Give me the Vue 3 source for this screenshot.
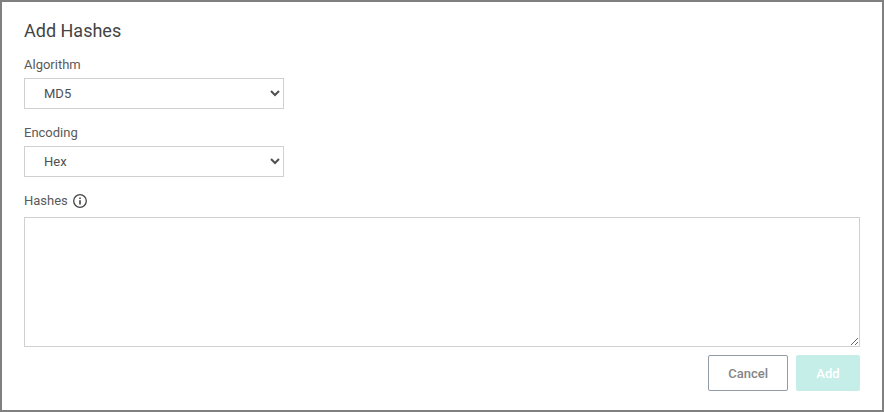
<script setup>
import { ref } from 'vue'

const algorithm = ref('MD5')
const encoding = ref('Hex')
const hashes = ref('')
</script>

<template>
  <form class="dialog" @submit.prevent>
    <h1 class="title">Add Hashes</h1>

    <div class="field">
      <label class="label" for="algorithm">Algorithm</label>
      <select id="algorithm" v-model="algorithm" class="select">
        <option>MD5</option>
        <option>SHA1</option>
        <option>SHA256</option>
      </select>
    </div>

    <div class="field">
      <label class="label" for="encoding">Encoding</label>
      <select id="encoding" v-model="encoding" class="select">
        <option>Hex</option>
        <option>Base64</option>
      </select>
    </div>

    <div class="field last">
      <div class="label-row">
        <label class="label" for="hashes">Hashes</label>
        <svg class="info" viewBox="0 0 14 14" aria-hidden="true">
          <circle cx="7" cy="7" r="6.3" fill="none" stroke="currentColor" stroke-width="1.3" />
          <path d="M6.2 6.2h1.6v4.3H6.2zM6.2 3.5h1.6v1.5H6.2z" fill="currentColor" />
        </svg>
      </div>
      <textarea id="hashes" v-model="hashes" class="textarea"></textarea>
    </div>

    <div class="actions">
      <button type="button" class="button cancel">Cancel</button>
      <button type="submit" class="button add" disabled>Add</button>
    </div>
  </form>
</template>

<style>
body {
  background: #fff;
}
</style>

<style scoped>
.dialog {
  box-sizing: border-box;
  border: 2px solid #808080;
  padding: 16px 22px 19px;
  font-family: Roboto, sans-serif;
  font-size: 13px;
  color: #5a5a5a;
}

.title {
  margin: 0 0 13px;
  font-size: 18px;
  font-weight: 400;
  line-height: 26px;
  color: #444;
}

.field {
  display: flex;
  flex-direction: column;
  margin-bottom: 16px;
}

.field.last {
  margin-bottom: 8px;
}

.label {
  line-height: 16px;
  margin-bottom: 5px;
}

.label-row {
  display: flex;
  gap: 5px;
  margin-bottom: 3px;
}

.info {
  width: 14px;
  height: 14px;
  margin-top: 1px;
  color: #444;
}

.select {
  box-sizing: border-box;
  width: 260px;
  max-width: 100%;
  height: 31px;
  padding: 0 0 0 15px;
  border: 1px solid #d0d0d0;
  border-radius: 0;
  background-color: #fff;
  font: inherit;
  color: #505050;
}

.textarea {
  box-sizing: border-box;
  width: 100%;
  height: 130px;
  padding: 8px;
  border: 1px solid #d0d0d0;
  font: inherit;
  color: inherit;
  resize: both;
}

.actions {
  display: flex;
  justify-content: flex-end;
  gap: 8px;
}

.button {
  box-sizing: border-box;
  min-width: 64px;
  height: 36px;
  padding: 0 19px;
  border: 1px solid #919ca7;
  border-radius: 2px;
  background: #fff;
  font: inherit;
  font-weight: 500;
  color: #858585;
}

.add {
  border-color: #c5eee8;
  background: #c5eee8;
  color: #fff;
}
</style>
